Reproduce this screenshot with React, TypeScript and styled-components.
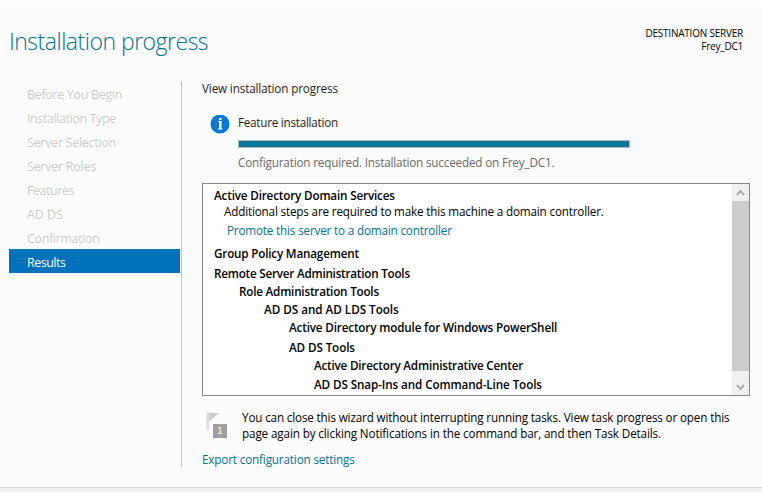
import React from 'react';
import styled, { createGlobalStyle } from 'styled-components';

const GlobalStyle = createGlobalStyle`
  * { box-sizing: border-box; }
  body {
    margin: 0;
    background: #fcfcfc;
    color: #000;
    font-family: 'Open Sans', 'Noto Sans', sans-serif;
    font-size: 11.7px;
    overflow: hidden;
  }
`;

const Wizard = styled.div`
  display: flex;
  flex-direction: column;
  width: 762px;
  height: 492px;
  border-top: 2px solid #fff;
`;

const Header = styled.header`
  display: flex;
  justify-content: space-between;
  height: 79px;
  padding: 24px 19px 0 9px;
`;

const Title = styled.h1`
  margin: 0;
  font-size: 23px;
  font-weight: 300;
  line-height: 31px;
  letter-spacing: -0.5px;
  color: #007298;
  white-space: nowrap;
`;

const Destination = styled.div`
  display: flex;
  flex-direction: column;
  align-items: flex-end;
  padding-top: 1px;
  font-size: 10px;
  line-height: 13px;
  letter-spacing: -0.22px;
`;

const Content = styled.div`
  display: flex;
  height: 386px;
`;

const Nav = styled.nav`
  width: 182px;
  padding: 0 1px 0 9px;
  border-right: 1px solid #c4c4c4;
`;

const NavItem = styled.div<{ $active?: boolean; $tracking: number }>`
  height: 24px;
  padding: 2px 0 0 18px;
  font-size: 12.4px;
  line-height: 24px;
  letter-spacing: ${(p) => p.$tracking}px;
  color: ${(p) => (p.$active ? '#fff' : '#cccccc')};
  background: ${(p) => (p.$active ? '#0072bc' : 'transparent')};
`;

const Main = styled.main`
  width: 580px;
  padding-left: 20px;
`;

const Line = styled.div<{ $tracking: number; $height?: number; $color?: string }>`
  height: ${(p) => p.$height ?? 16}px;
  line-height: ${(p) => (p.$height ?? 16) - 2}px;
  letter-spacing: ${(p) => p.$tracking}px;
  color: ${(p) => p.$color ?? '#1e1e1e'};
  white-space: nowrap;
`;

const Status = styled.section`
  display: flex;
  gap: 8px;
  height: 86px;
  padding: 18px 0 0 8px;
`;

const StatusIcon = styled.svg`
  width: 20px;
  height: 20px;
`;

const StatusBody = styled.div`
  width: 392px;
`;

const Progress = styled.div`
  height: 8px;
  margin: 9px 0 7px;
  border: 1px solid #b8b8b8;
  background: #007698;
`;

const ResultBox = styled.section`
  display: flex;
  width: 548px;
  height: 213px;
  border: 1px solid #828790;
  background: #fff;
`;

const ResultList = styled.div`
  flex: 1;
  padding: 3px 0 0 11px;
`;

const ResultRow = styled.div<{
  $indent?: number;
  $before?: number;
  $tracking: number;
  $kind?: 'name' | 'note' | 'link';
}>`
  height: 18px;
  margin-top: ${(p) => p.$before ?? 0}px;
  padding-left: ${(p) => p.$indent ?? 0}px;
  line-height: 16px;
  font-weight: ${(p) => (p.$kind ? 400 : 600)};
  letter-spacing: ${(p) => p.$tracking}px;
  color: ${(p) => (p.$kind === 'link' ? '#007298' : '#000')};
  white-space: nowrap;
`;

const ScrollBar = styled.div`
  display: flex;
  flex-direction: column;
  width: 17px;
  background: #f0f0f0;
`;

const ScrollButton = styled.div<{ $height: number; $drop?: number }>`
  display: flex;
  align-items: center;
  justify-content: center;
  height: ${(p) => p.$height}px;
  padding-top: ${(p) => p.$drop ?? 0}px;
`;

const ScrollThumb = styled.div`
  height: 170px;
  background: #cdcdcd;
`;

const Hint = styled.section`
  display: flex;
  height: 48px;
  padding-top: 14px;
`;

const FlagIcon = styled.svg`
  width: 40px;
  height: 28px;
`;

const Footer = styled.footer`
  flex: 1;
  margin-top: 20px;
  border-top: 1px solid #d9d9d9;
  background: #f0f0f0;
`;

const steps: [string, number][] = [
  ['Before You Begin', -0.28],
  ['Installation Type', -0.35],
  ['Server Selection', -0.23],
  ['Server Roles', -0.2],
  ['Features', -0.4],
  ['AD DS', 0],
  ['Confirmation', -0.3],
  ['Results', -0.45],
];

export default function App() {
  return (
    <>
      <GlobalStyle />
      <Wizard>
        <Header>
          <Title>Installation progress</Title>
          <Destination>
            <span>DESTINATION SERVER</span>
            <span>Frey_DC1</span>
          </Destination>
        </Header>
        <Content>
          <Nav>
            {steps.map(([label, tracking]) => (
              <NavItem key={label} $tracking={tracking} $active={label === 'Results'}>
                {label}
              </NavItem>
            ))}
          </Nav>
          <Main>
            <Line $tracking={-0.14}>View installation progress</Line>
            <Status>
              <StatusIcon viewBox="0 0 20 20">
                <circle cx="10" cy="9" r="9.5" fill="#0078d7" />
                <rect x="9" y="3" width="2.5" height="2" fill="#fff" />
                <path d="M8 6H11.5V13.5H12.5V14.5H8V13.5H9V7H8Z" fill="#fff" />
              </StatusIcon>
              <StatusBody>
                <Line $tracking={-0.25}>Feature installation</Line>
                <Progress />
                <Line $tracking={-0.17} $color="#6a6a6a">
                  Configuration required. Installation succeeded on Frey_DC1.
                </Line>
              </StatusBody>
            </Status>
            <ResultBox>
              <ResultList>
                <ResultRow $tracking={-0.17}>Active Directory Domain Services</ResultRow>
                <ResultRow $kind="note" $indent={10} $before={-2} $tracking={-0.17}>
                  Additional steps are required to make this machine a domain controller.
                </ResultRow>
                <ResultRow $kind="link" $indent={13} $before={1} $tracking={-0.17}>
                  Promote this server to a domain controller
                </ResultRow>
                <ResultRow $before={5} $tracking={-0.19}>Group Policy Management</ResultRow>
                <ResultRow $before={2} $tracking={-0.23}>Remote Server Administration Tools</ResultRow>
                <ResultRow $indent={25} $tracking={-0.21}>Role Administration Tools</ResultRow>
                <ResultRow $indent={50} $tracking={-0.03}>AD DS and AD LDS Tools</ResultRow>
                <ResultRow $indent={75} $tracking={-0.16}>
                  Active Directory module for Windows PowerShell
                </ResultRow>
                <ResultRow $indent={75} $before={2} $tracking={-0.12}>AD DS Tools</ResultRow>
                <ResultRow $indent={100} $tracking={-0.21}>
                  Active Directory Administrative Center
                </ResultRow>
                <ResultRow $indent={100} $before={1} $tracking={-0.11}>
                  AD DS Snap-Ins and Command-Line Tools
                </ResultRow>
              </ResultList>
              <ScrollBar>
                <ScrollButton $height={17}>
                  <svg width="9" height="7" viewBox="0 0 9 7">
                    <path d="M1 6L4.5 2L8 6" fill="none" stroke="#9b9b9b" strokeWidth="1.5" />
                  </svg>
                </ScrollButton>
                <ScrollThumb />
                <ScrollButton $height={24} $drop={8}>
                  <svg width="9" height="7" viewBox="0 0 9 7">
                    <path d="M1 1L4.5 5L8 1" fill="none" stroke="#9b9b9b" strokeWidth="1.5" />
                  </svg>
                </ScrollButton>
              </ScrollBar>
            </ResultBox>
            <Hint>
              <FlagIcon viewBox="0 0 40 28">
                <path d="M4.5 2H7V20H4.5Z" fill="#dcdcdc" />
                <path d="M7 3H17L7 12Z" fill="#cccccc" />
                <rect x="11" y="14" width="14" height="14" fill="#a29fa3" />
                <text
                  x="18"
                  y="24"
                  fill="#fff"
                  fontFamily="DejaVu Sans, sans-serif"
                  fontSize="9.5"
                  textAnchor="middle"
                >
                  1
                </text>
              </FlagIcon>
              <div>
                <Line $tracking={-0.158} $color="#000">
                  You can close this wizard without interrupting running tasks. View task progress or open this
                </Line>
                <Line $tracking={-0.13} $color="#000">
                  page again by clicking Notifications in the command bar, and then Task Details.
                </Line>
              </div>
            </Hint>
            <Line $tracking={-0.15} $height={32} $color="#007298">
              Export configuration settings
            </Line>
          </Main>
        </Content>
        <Footer />
      </Wizard>
    </>
  );
}
